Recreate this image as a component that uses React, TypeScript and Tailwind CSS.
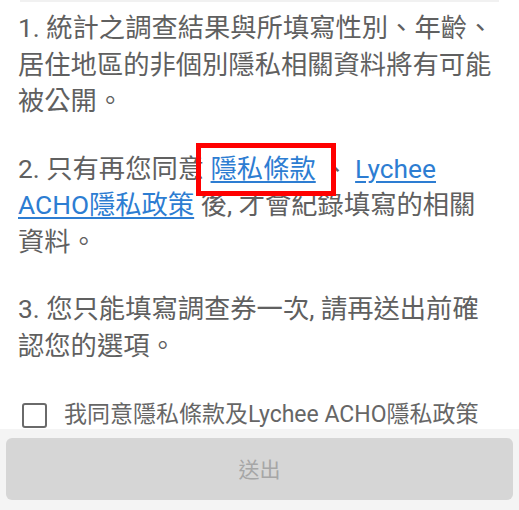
import React from "react";

export default function App() {
  const font = { fontFamily: "Roboto, 'Noto Sans CJK TC', sans-serif" };
  return (
    <div className="w-[519px] h-[510px] bg-white overflow-hidden flex flex-col" style={font}>
      <div className="flex-1 flex flex-col">
        <div className="mx-[20px] h-[2px] bg-[#f1f1f1]" />
        <div className="pt-[8px] pl-[18px] pr-[24px] text-[26.3px] leading-[36.5px] text-[#606060]">
          <p className="mb-[31px]">1. 統計之調查結果與所填寫性別、年齡、居住地區的非個別隱私相關資料將有可能被公開。</p>
          <p className="mb-[31px]">
            2. 只有再您同意{" "}
            <span className="relative">
              <span className="text-[#2d7dd2] underline underline-offset-[3px]">隱私條款</span>
              <span className="absolute left-[-15px] right-[-20px] top-[-11px] bottom-[-12px] border-[5px] border-[#ff0000] pointer-events-none" />
            </span>{" "}
            、{" "}
            <span className="text-[#2d7dd2] underline underline-offset-[3px]">Lychee ACHO隱私政策</span> 後, 才會紀錄填寫的相關資料。
          </p>
          <p>3. 您只能填寫調查券一次, 請再送出前確認您的選項。</p>
        </div>
        <div className="mt-auto h-[28px] flex items-center pl-[22px]">
          <div className="w-[25px] h-[25px] border-[2.5px] border-[#6a6a6a] rounded-[3px]" />
          <span className="ml-[17px] text-[23px] leading-[28px] text-[#666666]">我同意隱私條款及Lychee ACHO隱私政策</span>
        </div>
      </div>
      <div className="h-[81px] bg-[#f4f4f4] pt-[9px] pb-[10px] px-[6px]">
        <button className="w-full h-full rounded-[6px] bg-[#d6d6d6] text-[21px] text-[#a6a6a6] pt-[4px]">送出</button>
      </div>
    </div>
  );
}
